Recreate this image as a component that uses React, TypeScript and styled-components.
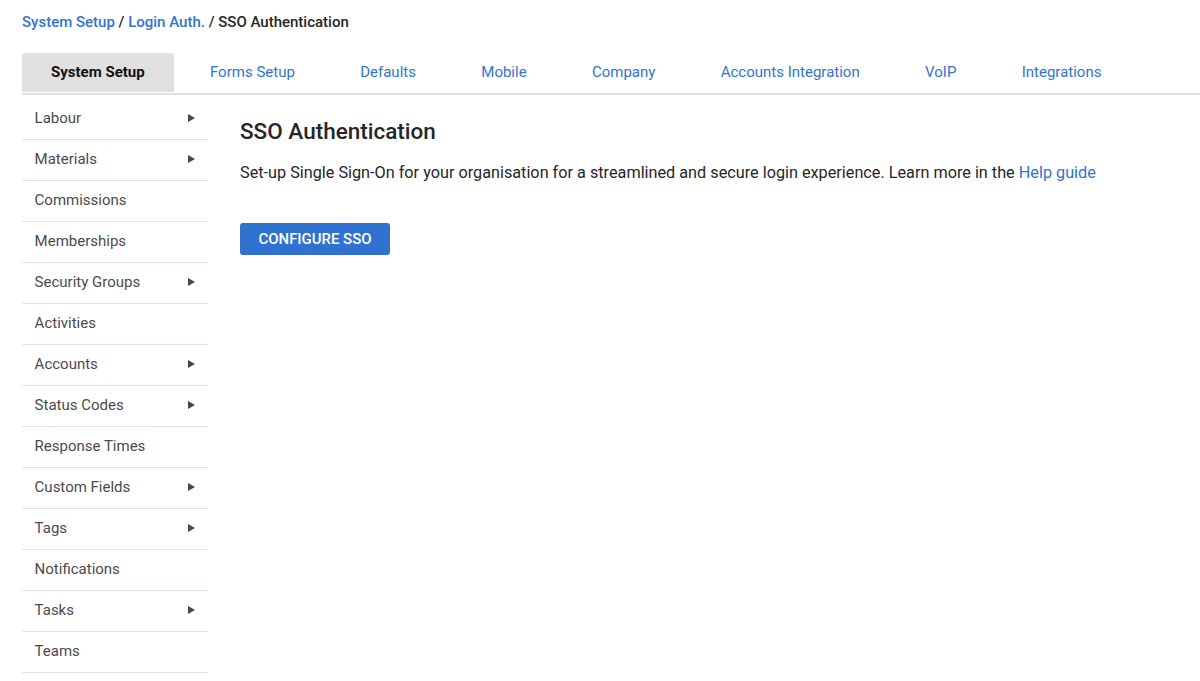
import styled, { createGlobalStyle } from 'styled-components'

const GlobalStyle = createGlobalStyle`
  html, body {
    margin: 0;
    padding: 0;
    height: 100%;
    overflow: hidden;
    background: #fff;
    font-family: Roboto, "Liberation Sans", sans-serif;
  }
  * {
    box-sizing: border-box;
  }
`

const Page = styled.div`
  padding: 13px 0 0 22px;
`

const Breadcrumb = styled.div`
  height: 18px;
  font-size: 15px;
  font-weight: 500;
  line-height: 18px;
  color: #262626;
`

const CrumbLink = styled.a`
  color: #3373d0;
  text-decoration: none;
`

const TabBar = styled.div`
  display: flex;
  gap: 7.35px;
  height: 42px;
  margin-top: 22px;
  border-bottom: 2px solid #e0e0e0;
`

const Tab = styled.a<{ $active?: boolean }>`
  display: block;
  height: 39px;
  padding: 0 29px;
  border-radius: 3px 3px 0 0;
  font-size: 15px;
  font-weight: ${({ $active }) => ($active ? 700 : 400)};
  line-height: 38px;
  color: ${({ $active }) => ($active ? '#111' : '#3373d0')};
  background: ${({ $active }) => ($active ? '#e0e0e0' : 'transparent')};
`

const Body = styled.div`
  display: flex;
  padding-top: 4px;
`

const SideMenu = styled.ul`
  flex: none;
  width: 186px;
  margin: 0;
  padding: 0;
  list-style: none;
`

const MenuRow = styled.li`
  display: flex;
  align-items: center;
  justify-content: space-between;
  height: 41px;
  padding: 0 13px 2px 12.6px;
  border-bottom: 1px solid #dee2e8;
  font-size: 15px;
  color: #4a4a4f;
`

const Arrow = styled.span`
  width: 0;
  height: 0;
  border-left: 7px solid #47474d;
  border-top: 4.5px solid transparent;
  border-bottom: 4.5px solid transparent;
`

const Content = styled.main`
  flex: 1;
  padding: 19px 0 0 32px;
`

const Title = styled.h1`
  margin: 0;
  font-size: 22.5px;
  font-weight: 500;
  line-height: 26px;
  color: #262626;
`

const Intro = styled.p`
  margin: 17px 0 0;
  font-size: 16.24px;
  line-height: 24px;
  color: #262626;
`

const HelpLink = styled.a`
  color: #3373d0;
  text-decoration: none;
`

const ConfigureButton = styled.button`
  display: block;
  width: 150px;
  height: 32px;
  margin-top: 38px;
  padding: 0;
  border: 0;
  border-radius: 3px;
  background: #3072d0;
  color: #fff;
  font-family: inherit;
  font-size: 14.95px;
  font-weight: 500;
`

const tabs = ['System Setup', 'Forms Setup', 'Defaults', 'Mobile', 'Company', 'Accounts Integration', 'VoIP', 'Integrations']

const menu = [
  { name: 'Labour', sub: true },
  { name: 'Materials', sub: true },
  { name: 'Commissions' },
  { name: 'Memberships' },
  { name: 'Security Groups', sub: true },
  { name: 'Activities' },
  { name: 'Accounts', sub: true },
  { name: 'Status Codes', sub: true },
  { name: 'Response Times' },
  { name: 'Custom Fields', sub: true },
  { name: 'Tags', sub: true },
  { name: 'Notifications' },
  { name: 'Tasks', sub: true },
  { name: 'Teams' }
]

export default function App() {
  return (
    <Page>
      <GlobalStyle />
      <Breadcrumb>
        <CrumbLink>System Setup</CrumbLink> / <CrumbLink>Login Auth.</CrumbLink> / SSO Authentication
      </Breadcrumb>
      <TabBar>
        {tabs.map((tab, index) => (
          <Tab key={tab} $active={index === 0}>{tab}</Tab>
        ))}
      </TabBar>
      <Body>
        <SideMenu>
          {menu.map(item => (
            <MenuRow key={item.name}>
              {item.name}
              {item.sub && <Arrow />}
            </MenuRow>
          ))}
        </SideMenu>
        <Content>
          <Title>SSO Authentication</Title>
          <Intro>
            Set-up Single Sign-On for your organisation for a streamlined and secure login experience. Learn more in the <HelpLink>Help guide</HelpLink>
          </Intro>
          <ConfigureButton>CONFIGURE SSO</ConfigureButton>
        </Content>
      </Body>
    </Page>
  )
}
